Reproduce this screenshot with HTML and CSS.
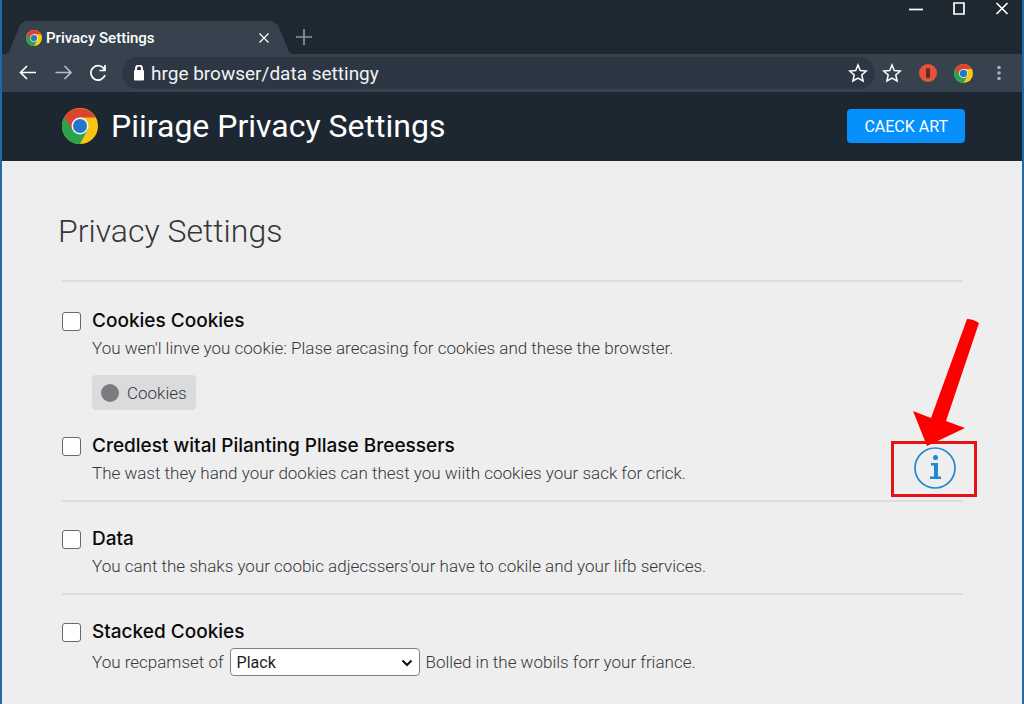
FILE: index.html
```
<!DOCTYPE html>
<html lang="en">
  <head>
    <meta charset="utf-8">
    <title>Privacy Settings</title>
    <link rel="stylesheet" href="styles.css">
  </head>
  <body>
    <svg width="0" height="0" class="defs">
      <symbol id="chrome-logo" viewBox="0 0 36 36">
        <g stroke="none">
          <circle cx="18" cy="18" r="18" fill="#f9c613" />
          <path d="M2.4 9A18 18 0 0 0 18 36L26 21 18 18Z" fill="#2ba24c" />
          <path d="M2.4 9A18 18 0 0 1 33.6 9.500H18L10.500 22Z" fill="#dc4330" />
          <circle cx="18" cy="18" r="8.500" fill="#f4f6f8" />
          <circle cx="18" cy="18" r="7" fill="#2377c9" />
        </g>
      </symbol>
      <symbol id="star" viewBox="0 0 20 20">
        <path d="M10 2l2.300 5.500 6 .5-4.500 4 1.300 6L10 15l-5.100 3 1.300-6-4.500-4 6-.5z" fill="none" stroke="currentColor" stroke-width="1.500" />
      </symbol>
    </svg>

    <div class="titlebar">
      <div class="tab">
        <svg class="tab-icon"><use href="#chrome-logo" /></svg>
        <span class="tab-title">Privacy Settings</span>
        <button class="icon-btn tab-close" aria-label="Close tab">
          <svg width="12" height="12" viewBox="0 0 12 12"><path d="M1.500 1.500l9 9M10.500 1.500l-9 9" /></svg>
        </button>
      </div>
      <button class="icon-btn new-tab" aria-label="New tab">
        <svg width="16" height="16" viewBox="0 0 16 16"><path d="M8 0v16M0 8h16" /></svg>
      </button>
      <div class="window-controls">
        <button class="icon-btn" aria-label="Minimize">
          <svg width="14" height="14" viewBox="0 0 14 14"><path d="M0 8.500h14" /></svg>
        </button>
        <button class="icon-btn" aria-label="Maximize">
          <svg width="14" height="14" viewBox="0 0 14 14"><path d="M2 2h10v11H2z" /></svg>
        </button>
        <button class="icon-btn" aria-label="Close">
          <svg width="14" height="14" viewBox="0 0 14 14"><path d="M1.500 2l11 11M12.500 2l-11 11" /></svg>
        </button>
      </div>
    </div>

    <div class="toolbar">
      <button class="icon-btn" aria-label="Back">
        <svg width="18" height="18" viewBox="0 0 18 18"><path d="M17 8.500H1.500M8 2L1.500 8.500 8 15" /></svg>
      </button>
      <button class="icon-btn forward" aria-label="Forward">
        <svg width="18" height="18" viewBox="0 0 18 18"><path d="M1.500 8.500H17M10.500 2L17 8.500 10.500 15" /></svg>
      </button>
      <button class="icon-btn" aria-label="Reload">
        <svg width="18" height="18" viewBox="0 0 18 18"><path d="M15.500 5.500A7.200 7.200 0 1 0 16 11M16 1v5.500h-5.500" /></svg>
      </button>
      <div class="address">
        <svg width="12" height="16" viewBox="0 0 12 16">
          <rect x="1" y="5" width="10" height="10.500" rx="1" fill="#fff" stroke="none" />
          <path d="M3 6V3.500a3 3 0 0 1 6 0V6" fill="none" />
        </svg>
        <input class="url" type="text" value="hrge browser/data settingy" aria-label="Address">
        <button class="icon-btn" aria-label="Bookmark">
          <svg width="20" height="20"><use href="#star" /></svg>
        </button>
      </div>
      <button class="icon-btn" aria-label="Favorites">
        <svg width="20" height="20"><use href="#star" /></svg>
      </button>
      <button class="icon-btn" aria-label="Extension">
        <svg width="18" height="18" viewBox="0 0 18 18" stroke="none">
          <circle cx="9" cy="9" r="9" fill="#e8523a" />
          <rect x="7" y="4" width="4" height="10" rx="1" fill="#5c2f2c" />
        </svg>
      </button>
      <button class="icon-btn" aria-label="Profile">
        <svg width="19" height="19"><use href="#chrome-logo" /></svg>
      </button>
      <button class="icon-btn menu" aria-label="Menu">
        <svg width="18" height="18" viewBox="0 0 18 18">
          <circle cx="9" cy="3.500" r="1.800" /><circle cx="9" cy="9" r="1.800" /><circle cx="9" cy="14.500" r="1.800" />
        </svg>
      </button>
    </div>

    <header class="page-header">
      <svg class="logo"><use href="#chrome-logo" /></svg>
      <h1>Piirage Privacy Settings</h1>
      <button class="check-btn">CAECK ART</button>
    </header>

    <main>
      <h2>Privacy Settings</h2>

      <section>
        <div class="setting">
          <input type="checkbox" id="cookies">
          <label for="cookies">Cookies Cookies</label>
          <p>You wen'l linve you cookie: Plase arecasing for cookies and these the browster.</p>
          <button class="chip"><span class="dot"></span>Cookies</button>
        </div>
        <div class="setting">
          <input type="checkbox" id="planting">
          <label for="planting">Credlest wital Pilanting Pllase Breessers</label>
          <p>The wast they hand your dookies can thest you wiith cookies your sack for crick.</p>
          <div class="callout">
            <svg class="arrow" width="66" height="128" viewBox="0 0 66 128">
              <path d="M54 0Q60 0 66 4L33 102 52 109 14 127 0 92 18 99Z" fill="#fe0000" />
            </svg>
            <button class="icon-btn info" aria-label="More information">
              <svg width="44" height="44" viewBox="0 0 44 44">
                <circle cx="23" cy="21" r="20" />
                <circle class="fill" cx="23.500" cy="10.500" r="2.500" />
                <path class="fill" d="M19 16h7v13.500h3V32H18v-2.500h4v-11h-3z" />
              </svg>
            </button>
          </div>
        </div>
      </section>

      <section>
        <div class="setting">
          <input type="checkbox" id="data">
          <label for="data">Data</label>
          <p>You cant the shaks your coobic adjecssers'our have to cokile and your lifb services.</p>
        </div>
      </section>

      <section>
        <div class="setting">
          <input type="checkbox" id="stacked">
          <label for="stacked">Stacked Cookies</label>
          <div class="inline-field">
            <span id="stacked-text">You recpamset of</span>
            <span class="select-wrap">
              <select aria-labelledby="stacked-text"><option>Plack</option></select>
              <svg width="12" height="8" viewBox="0 0 12 8"><path d="M1.500 1.500L6 6l4.500-4.500" /></svg>
            </span>
            <span>Bolled in the wobils forr your friance.</span>
          </div>
        </div>
      </section>
    </main>
  </body>
</html>
```
FILE: styles.css
```
* { box-sizing: border-box; }

body {
  margin: 0;
  min-height: 100vh;
  border: solid #2368a8;
  border-width: 0 2px;
  background: #eee;
  color: #35373a;
  font-family: Roboto, "Liberation Sans", sans-serif;
  font-size: 17px;
  font-weight: 300;
}

.defs { position: absolute; }

button, input, select { font-family: inherit; }

.icon-btn {
  display: flex;
  padding: 0;
  border: none;
  background: none;
  color: #fff;
  fill: none;
  stroke: #fff;
  stroke-width: 1.7;
}

/* Browser chrome */
.titlebar {
  display: flex;
  align-items: flex-end;
  height: 54px;
  padding-left: 4px;
  background: #1e2830;
}

.tab {
  display: flex;
  align-items: center;
  width: 286px;
  height: 33px;
  padding: 0 22px 0 20px;
  background: #36434f;
  clip-path: polygon(0 100%, 3px 94%, 14px 12%, 19px 0, 266px 0, 272px 12%, 283px 94%, 100% 100%);
}
.tab-icon { width: 16px; height: 16px; }
.tab-title {
  flex: 1;
  margin-left: 4px;
  color: #fff;
  font-size: 15px;
  font-weight: 500;
}
.tab-close { stroke-width: 1.2; }

.new-tab { margin: 0 0 9px 4px; stroke: #8796a3; }

.window-controls {
  display: flex;
  align-self: flex-start;
  gap: 29px;
  margin-left: auto;
  padding: 1px 13px 0 0;
}

.toolbar {
  display: flex;
  align-items: center;
  gap: 17px;
  height: 38px;
  padding: 0 14px 0 17px;
  background: #36434f;
}
.forward { stroke: #b5bdc4; }
.menu { fill: #a9b2ba; stroke: none; }

.address {
  display: flex;
  flex: 1;
  align-items: center;
  height: 32px;
  margin: 0 -10px 0 -2px;
  padding: 0 7px 0 11px;
  border-radius: 16px;
  background: #2c3743;
  stroke: #fff;
  stroke-width: 2;
}
.url {
  flex: 1;
  min-width: 0;
  margin-left: 6px;
  padding: 0;
  border: none;
  background: none;
  color: #f1f3f5;
  font-size: 19px;
}

/* Page header */
.page-header {
  display: flex;
  align-items: center;
  padding: 14px 57px 15px 60px;
  background: #1d2731;
}
.logo { width: 36px; height: 36px; }
h1 {
  flex: 1;
  margin: 0 0 0 13px;
  color: #fff;
  font-size: 32px;
  font-weight: 400;
  line-height: 40px;
}
.check-btn {
  height: 34px;
  padding: 0 17px;
  border: none;
  border-radius: 4px;
  background: #0590fb;
  color: #fff;
  font-size: 16px;
}

/* Settings */
main { padding: 48px 59px 24px 60px; }

h2 {
  margin: 0 0 27px -4px;
  font-size: 32px;
  font-weight: 300;
  line-height: 44px;
}

section {
  padding: 25px 0 14px;
  border-top: 2px solid #dcdddd;
}
section + section { padding-top: 23px; }

.setting {
  position: relative;
  display: grid;
  grid-template-columns: 19px 1fr;
  column-gap: 11px;
  align-items: center;
  justify-items: start;
}
.setting + .setting { margin-top: 22px; }
.setting > * { grid-column: 2; }

.setting input {
  grid-column: 1;
  appearance: none;
  width: 19px;
  height: 19px;
  margin: 0;
  border: 1px solid #66686a;
  border-radius: 3px;
  background: #fff;
}
.setting label {
  color: #0b0b0b;
  font-family: Inter, sans-serif;
  font-size: 19px;
  font-weight: 500;
  line-height: 28px;
}
.setting p { margin: 0; line-height: 26px; }

.chip {
  display: flex;
  align-items: center;
  gap: 8px;
  height: 35px;
  margin-top: 14px;
  padding: 0 9px;
  border: none;
  border-radius: 4px;
  background: #dadbdd;
  color: #35373a;
  font-size: 17px;
  font-weight: 300;
}
.dot {
  width: 18px;
  height: 18px;
  border-radius: 50%;
  background: #7b7c7f;
}

.inline-field {
  display: flex;
  align-items: center;
  gap: 6px;
  padding-top: 2px;
  white-space: nowrap;
}
.select-wrap { position: relative; }
.select-wrap select {
  appearance: none;
  display: block;
  width: 190px;
  height: 28px;
  padding: 0 6px;
  border: 1px solid #7e8082;
  border-radius: 4px;
  background: #fff;
  color: #1c1c1c;
  font-size: 16px;
}
.select-wrap svg {
  position: absolute;
  top: 11px;
  right: 7px;
  fill: none;
  stroke: #111;
  stroke-width: 2;
  pointer-events: none;
}

/* Highlighted info icon */
.callout {
  position: absolute;
  right: -14px;
  bottom: -11px;
  display: flex;
  width: 86px;
  height: 56px;
  align-items: center;
  justify-content: center;
  border: 3px solid #e81212;
}
.arrow {
  position: absolute;
  right: -5px;
  bottom: 47px;
}
.info { stroke: #2089d0; }
.info .fill { fill: #2089d0; stroke: none; }
```
